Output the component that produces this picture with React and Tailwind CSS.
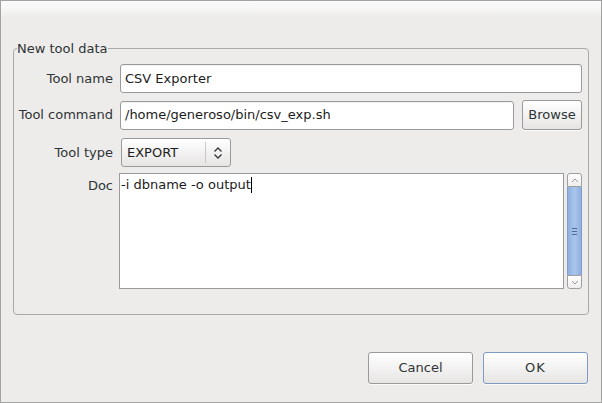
import React from "react";

const font = { fontFamily: '"DejaVu Sans", Verdana, sans-serif' };

function Label({ children, className = "" }) {
  return (
    <div className={"w-[99px] shrink-0 text-right text-[13px] text-[#2e3436] " + className}>
      {children}
    </div>
  );
}

function TextInput({ value, className = "" }) {
  return (
    <div
      className={
        "h-[29px] flex items-center rounded-[3px] border border-[#9a9a9a] bg-white pl-[4px] text-[13px] text-[#1c1c1c] shadow-[inset_0_1px_1px_rgba(0,0,0,0.06)] " +
        className
      }
    >
      {value}
    </div>
  );
}

function Button({ children, className = "", primary = false }) {
  return (
    <button
      className={
        "flex items-center justify-center rounded-[3px] border bg-gradient-to-b from-[#ffffff] to-[#e6e5e4] text-[13px] text-[#2e3436] shadow-[0_1px_0_rgba(255,255,255,0.8)] " +
        (primary ? "border-[#7d9bc4] " : "border-[#9a9a9a] ") +
        className
      }
      style={font}
    >
      {children}
    </button>
  );
}

export default function App() {
  return (
    <div
      className="w-[602px] h-[403px] flex flex-col border border-[#a3a3a3] bg-[#edeceb] overflow-hidden"
      style={font}
    >
      {/* title band */}
      <div className="h-[16px] shrink-0 bg-gradient-to-b from-[#fafafa] via-[#f6f6f5] to-[#edeceb]" />

      {/* group box */}
      <fieldset className="mx-[12px] mt-[24px] rounded-[4px] border border-[#a9a9a9] pl-0 pr-[6px] pb-[25px]">
        <legend className="ml-[3px] px-0 text-[13px] leading-[15px] text-[#2e3436]">
          New tool data
        </legend>

        <div className="flex flex-col gap-[7px] pt-[8px]">
          <div className="flex items-center gap-[7px]">
            <Label>Tool name</Label>
            <TextInput value="CSV Exporter" className="flex-1" />
          </div>

          <div className="flex items-center gap-[7px]">
            <Label>Tool command</Label>
            <TextInput value="/home/generoso/bin/csv_exp.sh" className="flex-1 pl-[3px]" />
            <Button className="w-[60px] h-[30px] ml-[1px]">Browse</Button>
          </div>

          <div className="flex items-center gap-[7px] mt-[1px]">
            <Label>Tool type</Label>
            <div className="ml-[1px] h-[29px] w-[110px] flex items-center rounded-[3px] border border-[#9a9a9a] bg-gradient-to-b from-[#ffffff] to-[#e6e5e4] text-[13px] text-[#1c1c1c]">
              <span className="flex-1 pl-[5px]">EXPORT</span>
              <span className="h-[21px] w-px bg-[#c8c8c8]" />
              <span className="w-[24px] flex items-center justify-center">
                <svg width="10" height="14" viewBox="0 0 10 14" fill="none" stroke="#3a3a3a" strokeWidth="1.4">
                  <path d="M1.5 5.5 L5 2 L8.5 5.5" />
                  <path d="M1.5 8.5 L5 12 L8.5 8.5" />
                </svg>
              </span>
            </div>
          </div>

          <div className="flex items-start gap-[6px] -mt-[1px]">
            <Label className="pt-[3px]">Doc</Label>
            <div className="flex-1 h-[116px] border border-[#9a9a9a] bg-white pl-[1px] pt-[3px] text-[13px] text-[#1c1c1c] leading-[16px]">
              <span>-i dbname -o output</span>
              <span className="inline-block w-px h-[16px] bg-black align-top" />
            </div>
            {/* scrollbar */}
            <div className="w-[15px] h-[116px] ml-[-3px] flex flex-col">
              <div className="h-[14px] rounded-t-[3px] border border-[#9f9f9f] bg-gradient-to-b from-white to-[#eeeeee] flex items-center justify-center">
                <svg width="8" height="5" viewBox="0 0 8 5" fill="none" stroke="#9a9a9a" strokeWidth="1">
                  <path d="M1 4 L4 1 L7 4" />
                </svg>
              </div>
              <div className="flex-1 border-x border-[#7f9ccb] bg-gradient-to-r from-[#8fb0e0] via-[#a9c5ec] to-[#8fb0e0] flex items-center justify-center">
                <div className="flex flex-col gap-[2px]">
                  <span className="block w-[5px] h-px bg-[#4a6a9a]" />
                  <span className="block w-[5px] h-px bg-[#4a6a9a]" />
                  <span className="block w-[5px] h-px bg-[#4a6a9a]" />
                </div>
              </div>
              <div className="h-[14px] rounded-b-[3px] border border-[#9f9f9f] bg-gradient-to-b from-white to-[#eeeeee] flex items-center justify-center">
                <svg width="8" height="5" viewBox="0 0 8 5" fill="none" stroke="#9a9a9a" strokeWidth="1">
                  <path d="M1 1 L4 4 L7 1" />
                </svg>
              </div>
            </div>
          </div>
        </div>
      </fieldset>

      {/* buttons */}
      <div className="flex-1" />
      <div className="flex justify-end gap-[10px] pr-[13px] pb-[18px]">
        <Button className="w-[105px] h-[32px]">Cancel</Button>
        <Button primary className="w-[105px] h-[32px] tracking-[1px]">OK</Button>
      </div>
    </div>
  );
}
